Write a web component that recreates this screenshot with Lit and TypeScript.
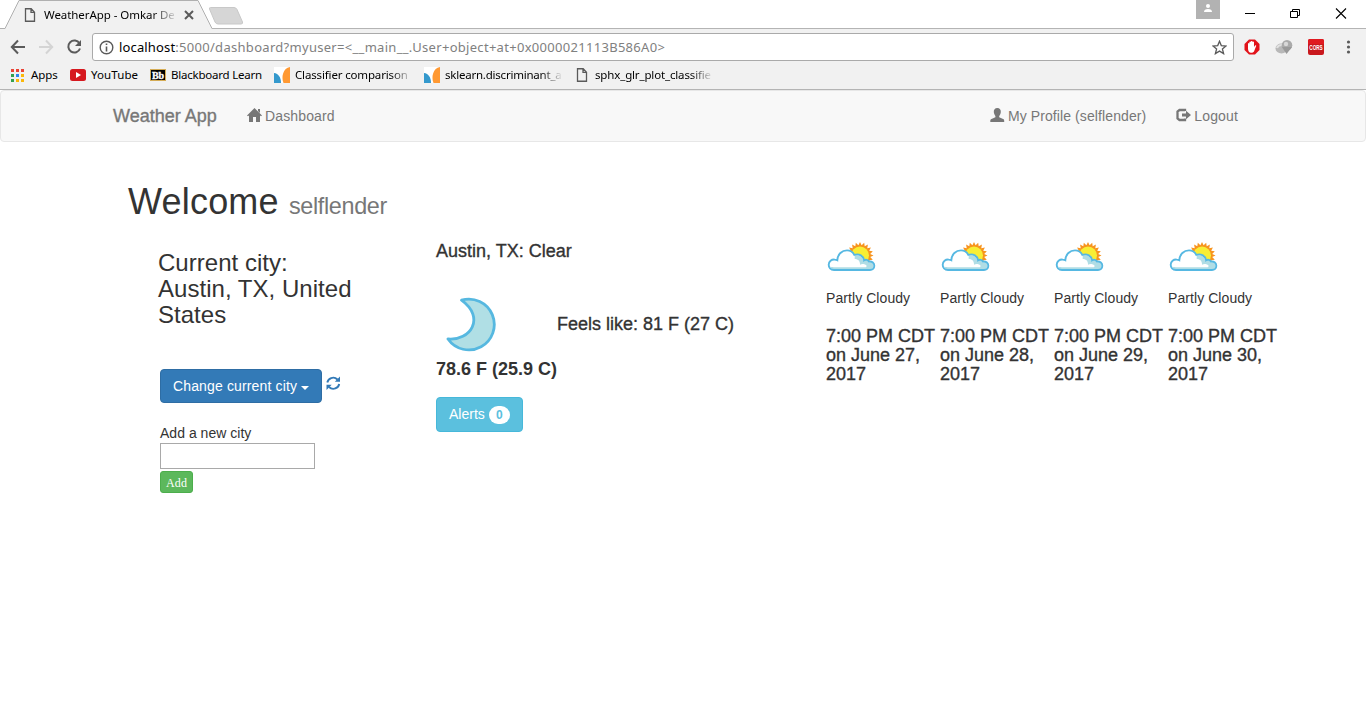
import { LitElement, html, css, svg } from "lit";
import { customElement, property } from "lit/decorators.js";

const pageIcon = html`<svg class="page" width="12" height="14" viewBox="0 0 12 14"><path d="M1.5 .75h5.7l3.3 3.4v9.1h-9zM7 .75v3.6h3.5" fill="none" stroke="#5a5a5a" stroke-width="1.3"/></svg>`;
const sklearnIcon = html`<svg width="16" height="16" viewBox="0 0 16 16"><path fill="#fff" d="M0 0h16v16H0z"/><path d="M0 6c4.500.5 7 4.500 7 10H0z" fill="#3499cd"/><path d="M16 0v16H9.500C7 10 9 1 16 0z" fill="#ff9933"/></svg>`;

@customElement("browser-bar")
export class BrowserBar extends LitElement {
  static styles = css`
    :host { display: block; height: 90px; box-sizing: border-box; border-bottom: 1px solid #b4b4b4; background: #f1f1f1; font: 11.500px/16px "Noto Sans", "Open Sans", sans-serif; color: #000; }
    svg { display: block; flex: none; }
    .tabs { height: 29px; display: flex; background: linear-gradient(#b4b4b4, #b4b4b4) 0 28px / 100% 1px no-repeat #fff; }
    .tab { width: 213px; height: 29px; display: grid; }
    .tab > * { grid-area: 1 / 1; }
    .tabrow { display: flex; align-items: center; padding: 1px 0 0 24px; }
    .title { margin-left: 8px; width: 130px; white-space: pre; letter-spacing: -.06px; -webkit-mask-image: linear-gradient(90deg, #000 108px, transparent 134px); }
    .close { margin-left: 9px; }
    .new { margin: 7px 0 0 -4px; }
    .spacer { flex: 1; }
    .person { width: 24px; height: 19px; background: #b2b2b2; margin-right: 24px; }
    .wincontrols { margin: 8px 19px 0 0; }
    .toolbar { height: 36px; display: flex; align-items: center; }
    .nav { margin-left: 10px; }
    .url { box-sizing: border-box; margin-left: 9px; width: 1142px; height: 28px; border: 1px solid #aaa; border-radius: 3px; background: #fff; display: flex; align-items: center; padding: 0 6px 0 6px; }
    .address { margin-left: 5px; font-size: 13px; flex: 1; color: #808080; white-space: pre; letter-spacing: .295px; }
    .host { color: #000; letter-spacing: .15px; }
    .ext { margin-left: 10px; }
    .cors-box { margin-left: 2px; }
    .marks { display: flex; height: 20px; align-items: center; padding-left: 11px; }
    .mark { display: flex; align-items: center; white-space: pre; }
    .apps span { margin-left: 7px; width: 39px; letter-spacing: -.05px; }
    .yt span { margin-left: 5px; width: 59px; letter-spacing: .1px; }
    .bb span { margin-left: 5px; width: 103px; letter-spacing: -.22px; }
    .sk1 span { margin-left: 5px; width: 129px; letter-spacing: -.15px; }
    .sk2 span { margin-left: 5px; width: 131px; letter-spacing: -.22px; }
    .sp span { margin-left: 7px; width: 117px; letter-spacing: -.15px; }
    .fade { -webkit-mask-image: linear-gradient(90deg, #000 96px, transparent 118px); }
    .bbt { font: bold 10px "Liberation Serif", serif; fill: #fff; stroke: #fff; stroke-width: .3px; }
    .cors { font: bold 7.500px "Liberation Sans", sans-serif; fill: #fff; }
  `;
  render() {
    return html`
      <div class="tabs">
        <div class="tab">
          <svg width="213" height="29" viewBox="0 0 213 29"><path d="M0 28.500H5L19 .5H198L212 28.500" fill="#f1f1f1" stroke="#b0b0b0"/><path d="M5.500 28.500H211.500" stroke="#f1f1f1"/></svg>
          <div class="tabrow">${pageIcon}<span class="title">WeatherApp - Omkar De</span>
            <svg class="close" width="12" height="12" viewBox="0 0 12 12"><path d="M2 2l8 8M10 2l-8 8" stroke="#5a5a5a" stroke-width="2"/></svg></div>
        </div>
        <svg class="new" width="35" height="18" viewBox="0 0 35 18"><path d="M1.500.5H25q2 0 3 2l5.500 12.500q.5 2-1.500 2H9q-2 0-3-2L.5 2Q0 .5 1.500.5z" fill="#d6d6d6" stroke="#c8c8c8"/></svg>
        <div class="spacer"></div>
        <svg class="person" viewBox="0 0 24 19"><circle cx="12" cy="6" r="2" fill="#fff"/><path d="M8 12q0-3 4-3t4 3z" fill="#fff"/></svg>
        <svg class="wincontrols" width="103" height="12" viewBox="0 0 103 12"><path d="M1 5.500h10M46.500 3.500h7v6h-7zM48.500 3.500v-2h7v6h-2" fill="none" stroke="#000"/><path d="M92 .5l10 10M102 .5l-10 10" stroke="#000" stroke-width="1.100"/></svg>
      </div>
      <div class="toolbar">
        <svg class="nav" width="73" height="16" viewBox="0 0 73 16"><path d="M15 8H2M8 1.500L1.800 8 8 14.500" fill="none" stroke="#5a5a5a" stroke-width="2"/><path d="M29 8h13M36 1.500L42.200 8 36 14.500" fill="none" stroke="#d4d4d4" stroke-width="2"/><path d="M69.500 4.500A6 6 0 1 0 70 9.500" fill="none" stroke="#5a5a5a" stroke-width="2"/><path d="M71 1v6h-6z" fill="#5a5a5a"/></svg>
        <div class="url">
          <svg width="15" height="15" viewBox="0 0 15 15"><circle cx="7.500" cy="7.500" r="6.300" fill="none" stroke="#5a5a5a" stroke-width="1.400"/><path d="M6.700 3.500h1.600v1.600H6.700zM6.700 6.500h1.600v5H6.700z" fill="#5a5a5a"/></svg>
          <span class="address"><span class="host">localhost</span>:5000/dashboard?myuser=&lt;__main__.User+object+at+0x0000021113B586A0&gt;</span>
          <svg width="15" height="15" viewBox="0 0 15 15"><path d="M7.500 1.300l1.800 4.300 4.700.4-3.600 3 1.200 4.600-4.100-2.500-4.100 2.500 1.200-4.600L1 6l4.700-.4z" fill="none" stroke="#5a5a5a" stroke-width="1.300"/></svg>
        </div>
        <svg class="ext" width="16" height="16" viewBox="0 0 16 16"><path d="M5 .5h6L15.500 5v6L11 15.500H5L.5 11V5z" fill="#e2131a"/><path d="M4 8V4.500q.8-.8 1.400 0V3q.8-.8 1.500 0V2.300q.8-.8 1.600 0V3q.8-.8 1.500 0v5l1.200-1.700q1.200-.2 1 .8L10 12.500Q9 14 7 13.800 4.300 13.500 4 10z" fill="#fff"/></svg>
        <svg width="44" height="16" viewBox="0 0 44 16"><ellipse cx="21.500" cy="9.500" rx="6" ry="5" fill="#b8b8b8"/><path d="M17 9q1-3 5-3" stroke="#e1e1e1" stroke-width="2" fill="none"/><circle cx="27" cy="6.300" r="5.300" fill="#aaa"/><path d="M22 8l4.500 7L32 8z" fill="#999"/><circle cx="26" cy="5" r="2.200" fill="#d8d8d8"/></svg>
        <svg class="cors-box" width="18" height="16" viewBox="0 0 18 16"><rect x="2" width="16" height="16" rx="2" fill="#c9181d"/><path d="M2 5V2q0-2 2-2h12q2 0 2 2v3z" fill="#e01a20"/><text class="cors" x="3.300" y="10.500" textLength="13.400" lengthAdjust="spacingAndGlyphs">CORS</text></svg>
        <svg width="40" height="16" viewBox="0 0 40 16"><circle cx="24.500" cy="3" r="1.600" fill="#5a5a5a"/><circle cx="24.500" cy="8" r="1.600" fill="#5a5a5a"/><circle cx="24.500" cy="13" r="1.600" fill="#5a5a5a"/></svg>
      </div>
      <div class="marks">
        <div class="mark apps"><svg width="13" height="13" viewBox="0 0 13 13"><path d="M0 0h3v3H0zM5 0h3v3H5zM10 0h3v3h-3z" fill="#ea4335"/><path d="M0 5h3v3H0zM0 10h3v3H0z" fill="#34a04e"/><path d="M5 5h3v3H5z" fill="#2f86ee"/><path d="M10 5h3v3h-3zM5 10h3v3H5zM10 10h3v3h-3z" fill="#fbb708"/></svg><span>Apps</span></div>
        <div class="mark yt"><svg width="16" height="12" viewBox="0 0 16 12"><rect width="16" height="12" rx="2.500" fill="#d6181e"/><path d="M6 3l5 3-5 3z" fill="#fff"/></svg><span>YouTube</span></div>
        <div class="mark bb"><svg width="16" height="12" viewBox="0 0 16 12"><rect x=".5" y=".5" width="15" height="11" fill="#000" stroke="#d5ac55"/><text class="bbt" x="2" y="9.500" textLength="12">Bb</text></svg><span>Blackboard Learn</span></div>
        <div class="mark sk1">${sklearnIcon}<span class="fade">Classifier comparison</span></div>
        <div class="mark sk2">${sklearnIcon}<span class="fade">sklearn.discriminant_a</span></div>
        <div class="mark sp">${pageIcon}<span class="fade">sphx_glr_plot_classifie</span></div>
      </div>`;
  }
}

@customElement("forecast-day")
export class ForecastDay extends LitElement {
  @property() date = "";
  @property() year = "2017";
  static styles = css`
    :host { display: block; width: 114px; color: #333; }
    svg { display: block; margin: -1px 0 8px; }
    .cond { font-size: 14px; line-height: 20px; white-space: nowrap; letter-spacing: .07px; }
    .when { margin-top: 18.500px; font-size: 18px; line-height: 19px; white-space: nowrap; -webkit-text-stroke: .35px #333; }
  `;
  render() {
    const pts = Array.from({ length: 40 }, (_, i) => {
      const a = (i * Math.PI) / 20, r = i % 2 ? 10.3 : 13.5;
      return `${(34 + r * Math.cos(a)).toFixed(1)},${(15.5 + r * Math.sin(a)).toFixed(1)}`;
    }).join(" ");
    return html`
      <svg width="50" height="40" viewBox="0 0 50 40">
        ${svg`<polygon points="${pts}" fill="#f7941e"/>`}
        <circle cx="34" cy="15.500" r="9" fill="#f8ee35"/>
        <path d="M8 30C4.500 30 2.700 27.500 2.700 24.800c0-3.600 3-5.500 6-5.200 1.200 0 2 .3 2.600.6.300-6 4.700-9.800 9.700-9.800 3.600 0 6 1.800 7.300 4.400 5-1.400 9.200 1 9.800 5.500 1.600-1 4-.7 4.900 1.200 3.200-.3 5.300 1.500 5.300 4.300 0 2.400-1.800 4.200-4.300 4.200z" fill="#fff"/>
        <path d="M28.700 15.500c4-1 8 1 8.500 5.500 1.800-1 4.500-1 5.500 1.200 2.700-.2 4.800.6 4.800 3.200 0 2.400-1.300 3.600-3.500 3.600H8.500C6 29.500 4.600 28.500 4.200 26.500 7 27.500 9 27.200 12 27.200h27c2.500 0 2-2.600-.8-3-2-.3-3 0-4.200.6.200-3.500-1.600-5.800-5.300-5.800z" fill="#b0dde5"/>
        <path d="M8 30C4.500 30 2.700 27.500 2.700 24.800c0-3.600 3-5.500 6-5.200 1.200 0 2 .3 2.600.6.300-6 4.700-9.800 9.700-9.800 3.600 0 6 1.800 7.300 4.400 5-1.400 9.200 1 9.800 5.500 1.600-1 4-.7 4.900 1.200 3.200-.3 5.300 1.500 5.300 4.300 0 2.400-1.800 4.200-4.300 4.200z" fill="none" stroke="#56b8e2" stroke-width="1.900"/>
      </svg>
      <div class="cond">Partly Cloudy</div>
      <div class="when">7:00 PM CDT<br>on ${this.date},<br>${this.year}</div>`;
  }
}

@customElement("app-root")
export class AppRoot extends LitElement {
  static styles = css`
    :host { display: block; width: 1366px; height: 728px; overflow: hidden; background: #fff; color: #333; font: 14px/20px "Liberation Sans", Arial, sans-serif; }
    svg { display: block; flex: none; }
    .navbar { box-sizing: border-box; height: 52px; border: 1px solid #e7e7e7; border-radius: 4px; background: #f8f8f8; color: #777; display: flex; align-items: center; padding: 0 127px 0 112px; white-space: nowrap; }
    .brand { font-size: 18px; width: 134px; -webkit-text-stroke: .35px #777; }
    .link { display: flex; gap: 3px; letter-spacing: .14px; }
    .profile { letter-spacing: .1px; }
    .link svg { margin-top: 2px; }
    .spacer { flex: 1; }
    .logout { margin-left: 30px; letter-spacing: .14px; }
    .welcome { margin: 40px 0 0 128px; font-size: 36px; line-height: 39.600px; height: 59px; letter-spacing: .2px; }
    .small { font-size: 23.400px; color: #777; letter-spacing: -.35px; }
    .cols { display: grid; grid-template-columns: 278px 390px 1fr; padding-left: 158px; align-items: start; }
    .city { font-size: 24px; line-height: 26px; margin-top: 9px; height: 119px; width: 210px; letter-spacing: .03px; }
    .row { display: flex; align-items: center; }
    .left { padding-left: 2px; }
    .btn { box-sizing: border-box; height: 34px; border: 1px solid #2e6da4; border-radius: 4px; background: #337ab7; color: #fff; display: flex; align-items: center; padding: 0 12px; white-space: nowrap; }
    .change { width: 162px; letter-spacing: .14px; }
    .caret { margin: 3px 0 0 4px; border: 4px solid transparent; border-top-color: #fff; border-bottom: 0; }
    .refresh { margin: -6px 0 0 4px; }
    .label { margin-top: 20px; letter-spacing: .02px; }
    .input { display: block; box-sizing: border-box; width: 155px; height: 26px; border: 1px solid #a9a9a9; border-radius: 0; padding: 1px; outline: none; }
    .add { margin-top: 2px; width: 33px; height: 22px; box-sizing: border-box; background: #5cb85c; border: 1px solid #4cae4c; border-radius: 3px; color: #fff; font: 12px/17px "Liberation Serif", serif; padding: 3px 0 0 5px; letter-spacing: .15px; }
    .h4 { font-size: 18px; line-height: 20px; -webkit-text-stroke: .35px #333; white-space: nowrap; }
    .obs { display: flex; margin-top: 36px; height: 62px; }
    .obs .h4 { margin: 17px 0 0 60px; }
    .temp { font-weight: bold; font-size: 18px; line-height: 20px; white-space: nowrap; }
    .alerts { margin-top: 18px; height: 35px; width: 87px; background: #5bc0de; border-color: #46b8da; padding-bottom: 2px; }
    .badge { width: 21px; height: 18px; border-radius: 10px; background: #fff; color: #5bc0de; font: bold 12px/18px "Liberation Sans", sans-serif; text-align: center; margin: 3px 0 0 4px; }
    .days { display: flex; }
  `;
  render() {
    return html`
      <browser-bar></browser-bar>
      <nav class="navbar">
        <span class="brand">Weather App</span>
        <span class="link"><svg width="15" height="15" viewBox="0 0 15 15"><path d="M7.500 0L15 7.500l-1 .8-1-.7V14H9V9H6v5H2V7.600l-1 .7-1-.8zM11 1h2v4l-2-2z" fill="#777"/></svg>Dashboard</span>
        <span class="spacer"></span>
        <span class="link profile"><svg width="15" height="15" viewBox="0 0 15 15"><path d="M7.300 0c2.400 0 3.800 1.700 3.500 4-.1 1.900-.8 3.100-1.600 4v1.300l3.900 1.600c.9.400 1.100.9 1.100 2V14H.3v-1.100c0-1.100.3-1.600 1.200-2l3.900-1.600V8C4.700 7.100 4 5.900 3.800 4 3.600 1.700 4.900 0 7.300 0z" fill="#777"/></svg>My Profile (selflender)</span>
        <span class="link logout"><svg width="15" height="15" viewBox="0 0 15 15"><path d="M9 3V2H3.500L1.500 3.500v7L3.500 12H9v-1.500" fill="none" stroke="#777" stroke-width="2.300"/><path d="M6 5.500h4V2.700L15 7l-5 4.300V8.500H6z" fill="#777"/></svg>Logout</span>
      </nav>
      <div class="welcome">Welcome <span class="small">selflender</span></div>
      <main class="cols">
        <section>
          <div class="city">Current city:<br>Austin, TX, United States</div>
          <div class="left">
            <div class="row"><div class="btn change">Change current city<span class="caret"></span></div>
              <svg class="refresh" width="15" height="15" viewBox="0 0 15 15"><path d="M1.300 6.500C2 2.500 7.500-.3 11.500 3.500M13.200 8C12.500 12 7 14.800 3 11" fill="none" stroke="#337ab7" stroke-width="1.900"/><path d="M14 .5v5.200H8.800zM.5 14V8.800h5.200z" fill="#337ab7"/></svg></div>
            <div class="label">Add a new city</div>
            <input class="input">
            <div class="add">Add</div>
          </div>
        </section>
        <section>
          <div class="h4">Austin, TX: Clear</div>
          <div class="obs">
            <svg width="61" height="60" viewBox="0 0 61 60"><path d="M25.500 3.200A25.400 25.400 0 1 1 12 42C34 44 50 21 25.500 3.200z" fill="#b0dfe5" stroke="#56b8e0" stroke-width="2.800" stroke-linejoin="round"/></svg>
            <div class="h4">Feels like: 81 F (27 C)</div>
          </div>
          <div class="temp">78.6 F (25.9 C)</div>
          <div class="btn alerts">Alerts<span class="badge">0</span></div>
        </section>
        <section class="days">
          ${["June 27", "June 28", "June 29", "June 30"].map((d) => html`<forecast-day .date=${d}></forecast-day>`)}
        </section>
      </main>`;
  }
}
